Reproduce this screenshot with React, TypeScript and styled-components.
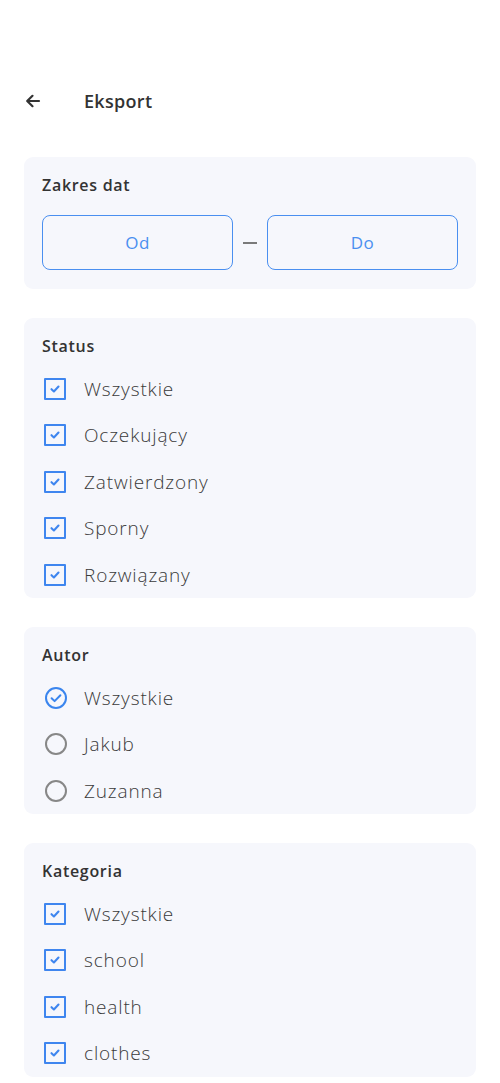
import React from "react";
import styled, { createGlobalStyle } from "styled-components";

const Global = createGlobalStyle`
  html, body { margin: 0; padding: 0; background: #ffffff; }
  body { font-family: "Open Sans", "Noto Sans", sans-serif; color: #333; }
  * { box-sizing: border-box; }
`;

const Page = styled.div`
  width: 500px;
  padding: 0 24px 0 24px;
  display: flex;
  flex-direction: column;
`;

const Header = styled.div`
  height: 56px;
  margin-top: 73px;
  margin-bottom: 28px;
  display: flex;
  align-items: center;
`;

const BackButton = styled.button`
  border: none;
  background: transparent;
  padding: 0;
  width: 60px;
  height: 24px;
  display: flex;
  align-items: center;
  color: #333;
  cursor: pointer;
`;

const Title = styled.h1`
  margin: 0;
  font-size: 18px;
  font-weight: 600;
  letter-spacing: 0.3px;
  color: #333;
`;

const Card = styled.section`
  background: #f6f7fc;
  border-radius: 9px;
  padding: 17px 18px 0 18px;
  display: flex;
  flex-direction: column;
  margin-bottom: 29px;
`;

const CardTitle = styled.h2`
  margin: 0;
  height: 22px;
  line-height: 22px;
  font-size: 16px;
  font-weight: 600;
  letter-spacing: 0.7px;
  color: #333;
`;

const DateRow = styled.div`
  display: flex;
  align-items: center;
  gap: 10px;
  margin-top: 19px;
  margin-bottom: 19px;
`;

const DateButton = styled.button`
  flex: 1;
  height: 55px;
  border: 1.5px solid #4a8ff0;
  border-radius: 8px;
  background: transparent;
  color: #4a8ff0;
  font-family: inherit;
  font-size: 17px;
  font-weight: 400;
  letter-spacing: 0.5px;
`;

const Dash = styled.span`
  width: 14px;
  height: 2px;
  background: #7a7a7a;
`;

const List = styled.div`
  display: flex;
  flex-direction: column;
  margin-top: 8.5px;
`;

const Row = styled.label`
  height: 46.5px;
  display: flex;
  align-items: center;
  font-size: 19px;
  font-weight: 300;
  color: #3a3a3a;
  letter-spacing: 0.85px;
`;

const IconSlot = styled.span`
  width: 42px;
  padding-left: 2px;
  display: flex;
  align-items: center;
`;

const Box = styled.span`
  width: 22px;
  height: 22px;
  border: 2px solid #3f86ef;
  border-radius: 1px;
  display: flex;
  align-items: center;
  justify-content: center;
`;

const CheckIcon = () => (
  <Box>
    <svg width="10" height="8" viewBox="0 0 10 8">
      <path d="M1.5 4.2 L3.9 6.4 L8.5 1.6" fill="none" stroke="#3f86ef" strokeWidth="2.1" strokeLinecap="round" strokeLinejoin="round" />
    </svg>
  </Box>
);

const RadioIcon = ({ checked }: { checked: boolean }) => (
  <svg width="24" height="24" viewBox="0 0 24 24">
    <circle cx="12" cy="12" r="10" fill="none" stroke={checked ? "#3a85ee" : "#878787"} strokeWidth="2" />
    {checked && (
      <path d="M7.6 12.2 L10.6 15.1 L16.4 9.2" fill="none" stroke="#3a85ee" strokeWidth="2" strokeLinecap="round" strokeLinejoin="round" />
    )}
  </svg>
);

const CheckRow = ({ label }: { label: string }) => (
  <Row>
    <IconSlot>
      <CheckIcon />
    </IconSlot>
    {label}
  </Row>
);

const RadioRow = ({ label, checked }: { label: string; checked: boolean }) => (
  <Row>
    <IconSlot>
      <RadioIcon checked={checked} />
    </IconSlot>
    {label}
  </Row>
);

export default function App() {
  return (
    <>
      <Global />
      <Page>
        <Header>
          <BackButton aria-label="back">
            <svg width="18" height="18" viewBox="0 0 18 18">
              <path d="M15 9 H3.5 M8.5 3.8 L3.2 9 L8.5 14.2" fill="none" stroke="#333" strokeWidth="2.2" strokeLinecap="round" strokeLinejoin="round" />
            </svg>
          </BackButton>
          <Title>Eksport</Title>
        </Header>

        <Card>
          <CardTitle>Zakres dat</CardTitle>
          <DateRow>
            <DateButton>Od</DateButton>
            <Dash />
            <DateButton>Do</DateButton>
          </DateRow>
        </Card>

        <Card>
          <CardTitle>Status</CardTitle>
          <List>
            {["Wszystkie", "Oczekujący", "Zatwierdzony", "Sporny", "Rozwiązany"].map((l) => (
              <CheckRow key={l} label={l} />
            ))}
          </List>
        </Card>

        <Card>
          <CardTitle>Autor</CardTitle>
          <List>
            <RadioRow label="Wszystkie" checked />
            <RadioRow label="Jakub" checked={false} />
            <RadioRow label="Zuzanna" checked={false} />
          </List>
        </Card>

        <Card>
          <CardTitle>Kategoria</CardTitle>
          <List>
            {["Wszystkie", "school", "health", "clothes"].map((l) => (
              <CheckRow key={l} label={l} />
            ))}
          </List>
        </Card>
      </Page>
    </>
  );
}
